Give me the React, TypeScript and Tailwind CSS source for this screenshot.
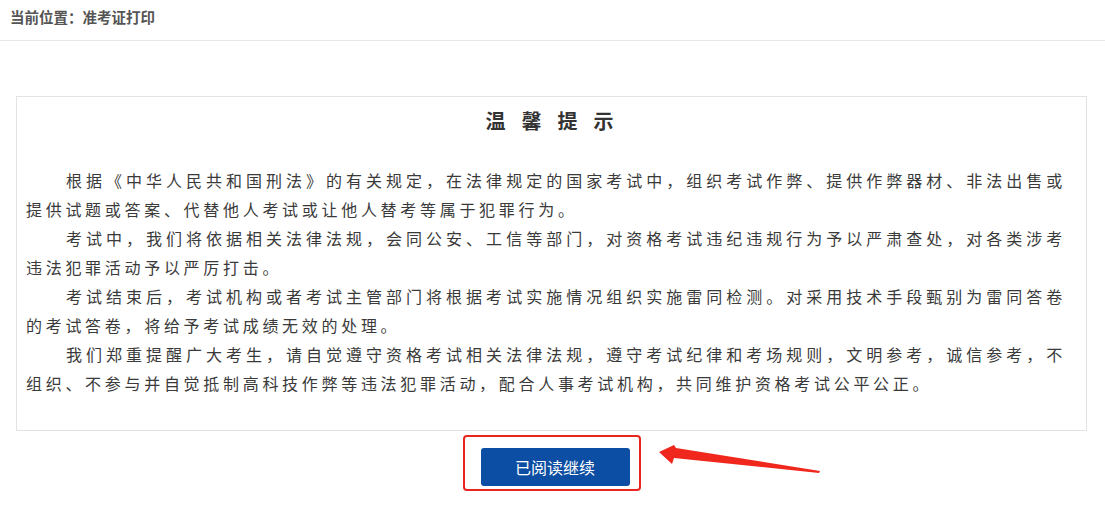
const paragraphs = [
    [
        "根据《中华人民共和国刑法》的有关规定，在法律规定的国家考试中，组织考试作弊、提供作弊器材、非法出售或",
        "提供试题或答案、代替他人考试或让他人替考等属于犯罪行为。",
    ],
    [
        "考试中，我们将依据相关法律法规，会同公安、工信等部门，对资格考试违纪违规行为予以严肃查处，对各类涉考",
        "违法犯罪活动予以严厉打击。",
    ],
    [
        "考试结束后，考试机构或者考试主管部门将根据考试实施情况组织实施雷同检测。对采用技术手段甄别为雷同答卷",
        "的考试答卷，将给予考试成绩无效的处理。",
    ],
    [
        "我们郑重提醒广大考生，请自觉遵守资格考试相关法律法规，遵守考试纪律和考场规则，文明参考，诚信参考，不",
        "组织、不参与并自觉抵制高科技作弊等违法犯罪活动，配合人事考试机构，共同维护资格考试公平公正。",
    ],
];

const App = () => {
    return (
        <div className="min-h-screen bg-white font-['Noto_Sans_CJK_SC',sans-serif]">
            <div className="h-[41px] border-b border-[#e8e8e8] pt-[8px] px-[10px]">
                <p className="text-[14.5px] leading-[18px] font-bold text-[#555]">当前位置：准考证打印</p>
            </div>

            <div className="ml-[16px] w-[1071px] mt-[55px] border border-[#e3e3e3] pt-[9px] pb-[32px]">
                <p className="h-[30px] leading-[30px] text-center text-[20px] font-bold text-[#333] tracking-[16px] pl-[12px]">温馨提示</p>

                <div className="mt-[30px] pl-[9px] pr-[20px] text-[16px] leading-[29px] text-[#3a3a3a] tracking-[3.7px]">
                    {paragraphs.map((p, i) => (
                        <div key={i}>
                            <p className="pl-[40px] text-justify [text-align-last:justify] whitespace-nowrap">{p[0]}</p>
                            <p className="whitespace-nowrap">{p[1]}</p>
                        </div>
                    ))}
                </div>
            </div>

            <div className="ml-[16px] w-[1071px] mt-[4px] flex justify-center">
                <div className="relative w-[178px] h-[56px] border-2 border-[#e8261f] rounded-[4px] pt-[11px] pl-[16px]">
                    <button className="w-[149px] h-[38px] bg-[#0c4ea3] rounded-[3px] text-white text-[16px]">已阅读继续</button>
                    <svg className="absolute left-[192px] top-[3px]" width="170" height="36" viewBox="0 0 170 36">
                        <polygon points="2,12 17,5 19,8 163,31 162,33 17,18 15,24" fill="#f0271d" />
                    </svg>
                </div>
            </div>
        </div>
    );
};

export default App;
